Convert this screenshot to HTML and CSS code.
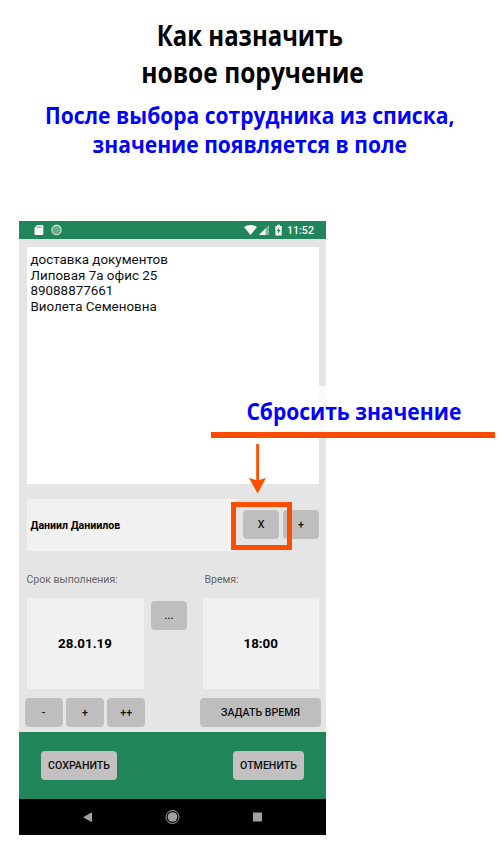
FILE: index.html
```html
<!DOCTYPE html>
<html lang="ru">
<head>
<meta charset="utf-8">
<title>Как назначить новое поручение</title>
<link rel="stylesheet" href="styles.css">
</head>
<body>
<header class="intro">
  <h1><span class="t1">Как назначить</span><span class="t2">новое поручение</span></h1>
  <p><span class="p1">После выбора сотрудника из списка,</span><span class="p2">значение появляется в поле</span></p>
</header>
<main class="phone">
  <div class="status">
    <svg class="left-icons" width="30" height="12" viewBox="0 0 30 12">
      <path fill="#fff" d="M3.2 1H8.5Q9.3 1 9.3 1.8V10.2Q9.3 11 8.5 11H1.3Q.5 11 .5 10.2V3.8Z"/>
      <path stroke="#21855b" stroke-width=".8" d="M3.4 2.3v1.8M5.2 2.3v1.8M7 2.3v1.8"/>
      <circle cx="22.5" cy="6" r="4.7" fill="#69ad8e" stroke="#b9d8ca" stroke-width="1.2"/>
      <path d="M19 2.8A4.7 4.7 0 0 1 27 4.5" fill="none" stroke="#d7e9e1" stroke-width="1"/>
    </svg>
    <svg class="right-icons" width="40" height="12" viewBox="0 0 40 12">
      <path fill="#fff" d="M0 3Q6.5-1 13 3L6.5 11Z"/>
      <path fill="#80b79f" d="M25 1V11H15Z"/>
      <path fill="#fff" d="M21.5 4.5V11H15Z"/>
      <path fill="#fff" d="M33 .7h3v1.2h1.7V11.5H31.4V1.9H33Z"/>
      <path fill="#21855b" d="M35.3 3.2L32.6 7.1h1.6L33.8 10.2 36.5 6.1H34.9Z"/>
    </svg>
    <span class="clock">11:52</span>
  </div>
  <section class="form">
    <div class="note">доставка документов<br>Липовая 7а офис 25<br>89088877661<br>Виолета Семеновна</div>
    <div class="person-row">
      <div class="person">Даниил Даниилов</div>
      <button class="small clear">X</button>
      <button class="small">+</button>
    </div>
    <div class="schedule">
      <div class="label">Срок выполнения:</div><div></div><div class="label time-label">Время:</div>
      <div class="value">28.01.19</div>
      <button class="small more">...</button>
      <div class="value">18:00</div>
    </div>
    <div class="adjust">
      <button>-</button><button>+</button><button>++</button><button class="set-time">ЗАДАТЬ ВРЕМЯ</button>
    </div>
  </section>
  <footer class="actions"><button class="save">СОХРАНИТЬ</button><button class="cancel">ОТМЕНИТЬ</button></footer>
  <nav class="nav">
    <svg width="307" height="36" viewBox="0 0 307 36" fill="#a0a0a0">
      <path d="M64 18.3L73 13.3V23.3Z"/>
      <circle cx="153.5" cy="18" r="4.8"/><circle cx="153.5" cy="18" r="6.5" fill="none" stroke="#a0a0a0"/>
      <path d="M234 13.5h9v9h-9z"/>
    </svg>
  </nav>
</main>
<div class="callout"><span>Сбросить значение</span></div>
<svg class="arrow" width="18" height="50" viewBox="0 0 18 50" fill="#ff4d00">
  <path d="M7.2 0h2.8V36L17 34 8.6 49.5 0 34 7.2 36Z"/>
</svg>
<div class="focus"></div>
</body>
</html>
```
FILE: styles.css
```css
* { box-sizing: border-box; }
body { margin: 0; width: 500px; height: 850px; overflow: hidden; position: relative; background: #fff; font-family: Roboto, sans-serif; color: #000; }
.intro { height: 221px; padding-top: 16px; font-family: "Open Sans", sans-serif; font-weight: 700; }
h1, p { margin: 0; display: flex; flex-direction: column; align-items: center; white-space: nowrap; }
h1 { font-size: 29px; line-height: 37px; }
h1 span, p span { display: block; }
p { font-size: 23px; line-height: 29px; color: #00f; margin-top: 11px; }
.t1 { transform: scaleX(.825); }
.t2 { transform: translateX(3px) scaleX(.846); }
.p1, .p2 { transform: scaleX(.915); }
.phone { width: 307px; margin-left: 19px; }
.status { height: 18px; background: #21855b; display: flex; align-items: center; padding: 0 12px 0 15px; color: #fff; }
.right-icons { margin-left: auto; margin-right: 3px; }
.clock { font-size: 10.7px; font-weight: 500; line-height: 18px; padding-top: 1px; }
.form { height: 493px; background: #e5e5e5; padding: 8px 7px 0 7.5px; }
.note { height: 236.5px; background: #fff; padding: 5px 4px; font-size: 13.4px; line-height: 15.7px; color: #111; }
.person-row { margin-top: 15px; display: flex; align-items: center; height: 52px; }
.person { width: 209.5px; height: 52px; line-height: 53px; background: #f1f1f1; padding-left: 4px; font-size: 10.6px; font-weight: 700; }
button { height: 29px; border: 0; border-radius: 4px; padding: 0; background: #bebebe; color: #111; font: 500 10.6px/30px Roboto, sans-serif; }
.small { width: 36px; margin-left: 4px; }
.clear { margin-left: 7px; }
.schedule { display: grid; grid-template-columns: 117px 59px 116.5px; grid-template-rows: 47px 91px; }
.label { font-size: 10.5px; line-height: 14px; padding-top: 22px; color: #666; }
.time-label { padding-left: 2px; }
.value { background: #f1f1f1; text-align: center; font-size: 13.4px; font-weight: 700; line-height: 91px; }
.more { margin: 3.5px 0 0 7.5px; }
.adjust { display: flex; gap: 3px; margin: 9px -2px 0; }
.adjust button { width: 38.3px; }
.adjust .set-time { width: 121px; margin-left: auto; }
.actions { height: 67px; background: #21855b; display: flex; justify-content: space-between; align-items: center; padding: 0 22px; }
.actions button { background: #c2c0c0; }
.save { width: 76px; }
.cancel { width: 71px; }
.nav { height: 36px; background: #000; }
.nav svg { display: block; }
.callout { position: absolute; left: 211px; top: 386px; width: 283.5px; height: 51.5px; border-bottom: 6px solid #ff4d00; background: rgba(255,255,255,.8); text-align: center; font: 700 23px/50px "Open Sans", sans-serif; color: #00f; white-space: nowrap; }
.callout span { display: inline-block; transform: translateX(1.4px) scaleX(.915); }
.arrow { position: absolute; left: 249px; top: 444px; }
.focus { position: absolute; left: 231px; top: 502px; width: 61px; height: 48px; border: 5px solid #ff4d00; }
```
